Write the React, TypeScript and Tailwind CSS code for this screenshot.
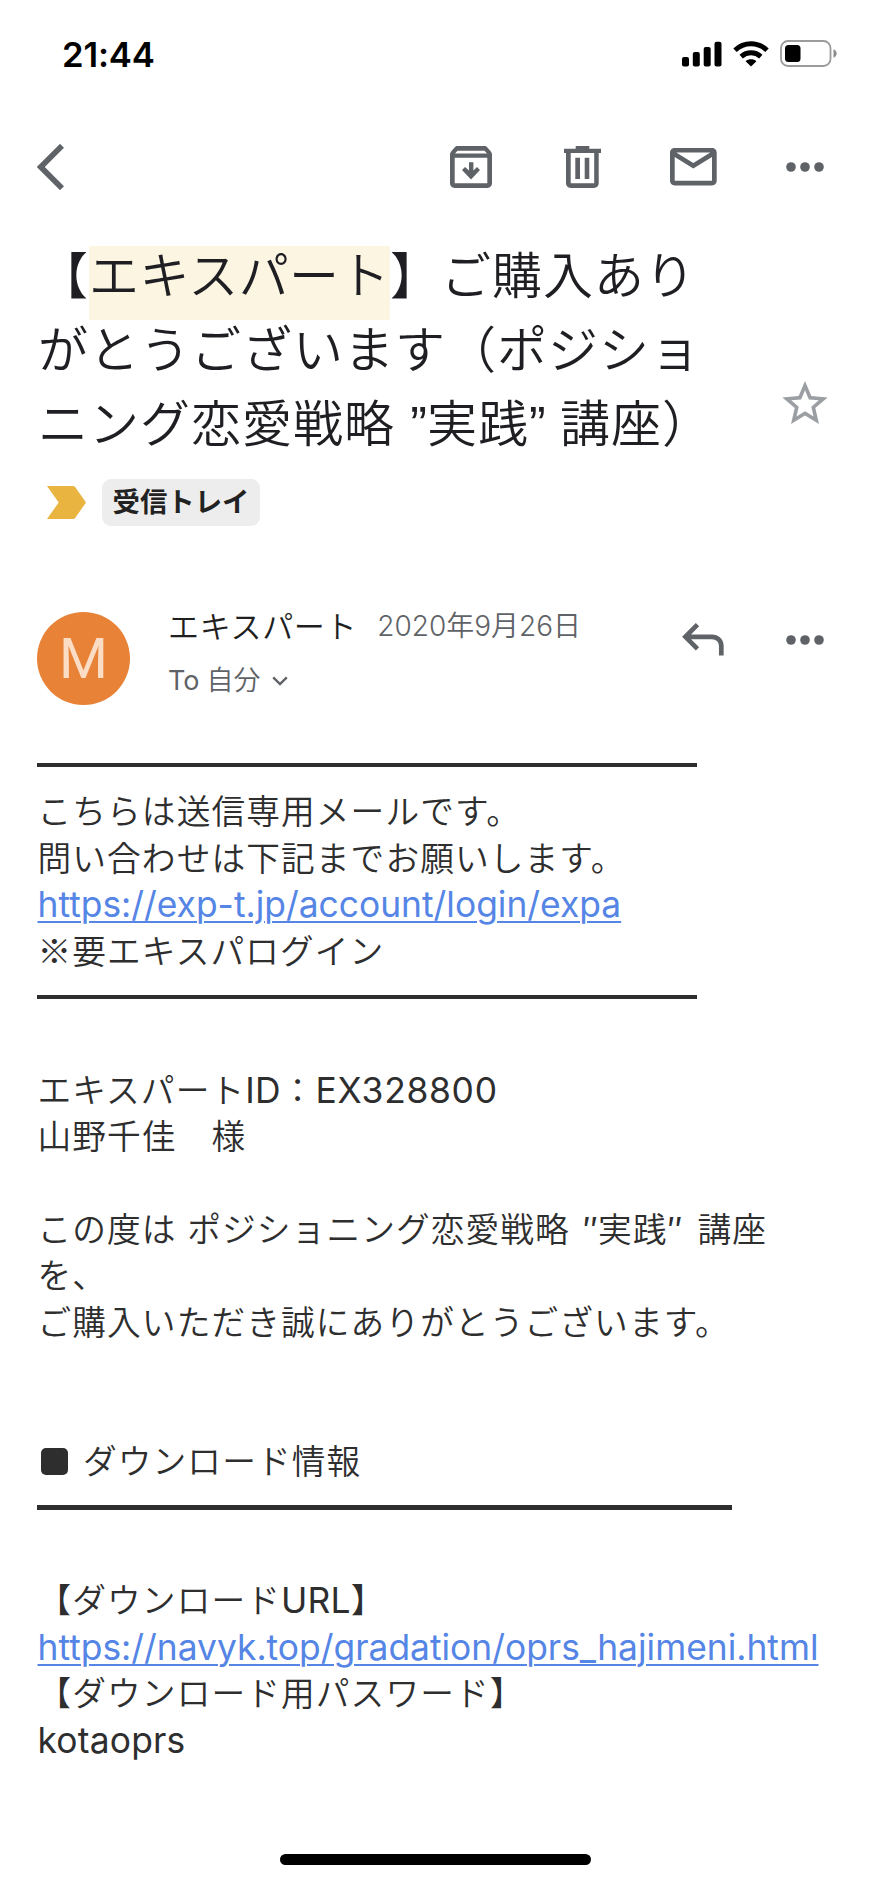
import React from "react";

const StatusBar = () => (
  <div className="flex h-[107px] items-center justify-between pl-[62px] pr-[32px]">
    <p className="mt-px text-[34.7px] font-semibold leading-none tracking-[-0.2px] text-black">
      21:44
    </p>
    <div className="flex items-center">
      <svg width="40" height="26" viewBox="0 0 40 26">
        <rect x="0" y="16" width="7" height="9.5" rx="2" />
        <rect x="10.8" y="11" width="7" height="14.5" rx="2" />
        <rect x="21.7" y="6" width="7" height="19.5" rx="2" />
        <rect x="32.5" y="0.7" width="7" height="24.8" rx="2" />
      </svg>
      <svg className="ml-[11px]" width="36" height="26" viewBox="0 0 36 26">
        <g fill="none" stroke="#000" strokeWidth="5">
          <path d="M2 9.2C11 0.6 25 0.6 34 9.2" />
          <path d="M8.2 15.6C13.8 10.6 22.2 10.6 27.8 15.6" />
        </g>
        <path d="M18 25.6l-5.4-5.4c3-2.6 7.8-2.6 10.8 0z" />
      </svg>
      <svg className="ml-[11px]" width="58" height="27" viewBox="0 0 58 27">
        <rect
          x="1"
          y="1"
          width="49.5"
          height="25"
          rx="7"
          fill="none"
          stroke="#9b9b9b"
          strokeWidth="1.8"
        />
        <rect x="5" y="5" width="15.5" height="17" rx="3.5" />
        <path d="M53.5 9.3c4.2 1.4 4.2 7 0 8.4z" fill="#8c8c8c" />
      </svg>
    </div>
  </div>
);

const Dots = () => (
  <svg width="38" height="10" viewBox="0 0 38 10" fill="#5f6367">
    <circle cx="5" cy="5" r="4.8" />
    <circle cx="19" cy="5" r="4.8" />
    <circle cx="33" cy="5" r="4.8" />
  </svg>
);

const Toolbar = () => (
  <div className="flex h-[120px] items-center pl-[37px] text-[#5f6367]">
    <svg width="28" height="46" viewBox="0 0 28 46" fill="none">
      <path d="M25 1.8L3.8 23 25 44.2" stroke="currentColor" strokeWidth="5.6" />
    </svg>
    <svg className="ml-[385px]" width="42" height="42" viewBox="0 0 42 42" fill="currentColor">
      <path
        fillRule="evenodd"
        d="M7.5 0h27c1.1 0 2 .5 2.7 1.3l3.7 4.2c.7.8 1.1 1.9 1.1 3v28.8c0 2.6-2.1 4.7-4.7 4.7H4.7C2.1 42 0 39.9 0 37.3V8.5c0-1.1.4-2.2 1.1-3l3.7-4.2C5.5.5 6.4 0 7.5 0zM7.5 4.7L5 7.5h32l-2.5-2.8zM4.7 11.7v25.6h32.6V11.7z"
      />
      <path d="M19 16.3h4.4v8.2l3.600-3.500 3 3.100-9 9.500-9-9.500 3-3.100 4 3.500z" />
    </svg>
    <svg className="ml-[72px]" width="37" height="42" viewBox="0 0 37 42" fill="currentColor">
      <path
        fillRule="evenodd"
        d="M11.7 0h13.6v2.7H37V7h-2.3v30.3c0 2.6-2.1 4.7-4.7 4.7H6.7C4.1 42 2 39.9 2 37.3V7H0V2.7h11.7zM6.7 7v30.3h23.5V7z"
      />
      <path d="M11.3 11.7H16V33h-4.7zM20.7 11.7h4.6V33h-4.6z" />
    </svg>
    <svg className="ml-[69px]" width="47" height="38" viewBox="0 0 47 38" fill="currentColor">
      <path
        fillRule="evenodd"
        d="M4.7 0H42c2.6 0 4.7 2.1 4.7 4.7v28c0 2.6-2.1 4.7-4.7 4.7H4.7C2.1 37.4 0 35.3 0 32.7v-28C0 2.1 2.1 0 4.7 0zM6.3 4.5l17 10.5 17-10.5zM4.7 9v23.7H42V9L23.3 20.5z"
      />
    </svg>
    <div className="ml-[69px] flex">
      <Dots />
    </div>
  </div>
);

const Subject = () => (
  <div className="flex pl-[37px] pr-[42px] pt-[12px]">
    <h1 className="h-[222px] w-[745px] whitespace-nowrap pl-px text-[50px] font-[350] leading-[74px] tracking-[1px] text-[#1f1f23]">
      <div className="h-[74px]">
        【
        <span className="mb-[-7px] inline-block h-[74px] bg-[#fbf5e2] leading-[61px] tracking-[0.4px]">
          エキスパート
        </span>
        】ご購入あり
      </div>
      <div className="h-[74px]">がとうございます（ポジショ</div>
      <div className="h-[74px]">
        ニング恋愛戦略
        <span className="inline-block w-[32px] text-right font-['Liberation_Sans',sans-serif] leading-none tracking-normal">
          ”
        </span>
        実践
        <span className="inline-block w-[31px] font-['Liberation_Sans',sans-serif] leading-none tracking-normal">
          ”
        </span>
        講座）
      </div>
    </h1>
    <svg className="mt-[142px] shrink-0" width="46" height="43" viewBox="2 2 20 19" fill="#9b9fa3">
      <path d="M22 9.24l-7.19-.62L12 2 9.19 8.63 2 9.24l5.46 4.73L5.82 21 12 17.27 18.18 21l-1.63-7.03L22 9.24zM12 15.4l-3.76 2.27 1-4.28-3.32-2.88 4.38-.38L12 6.1l1.71 4.04 4.38.38-3.32 2.88 1 4.28L12 15.4z" />
    </svg>
  </div>
);

const Labels = () => (
  <div className="mt-[18px] flex h-[47px] items-center pl-[47px]">
    <svg width="39" height="33" viewBox="0 0 39 33" fill="#e9b43f">
      <path d="M0 0h25.5c1.2 0 2.2.5 3 1.5L39 16.5 28.5 31.5c-.8 1-1.8 1.5-3 1.5H0l11.7-16.5z" />
    </svg>
    <span className="ml-[16px] flex h-[47px] w-[158px] items-center justify-center rounded-[9px] bg-[#ededed] text-[27.4px] font-semibold leading-none text-[#222]">
      受信トレイ
    </span>
  </div>
);

const Sender = () => (
  <div className="mt-[86px] flex h-[93px] pl-[37px] text-[#5f6367]">
    <div className="flex h-[93px] w-[93px] items-center justify-center rounded-full bg-[#e88237] font-['Roboto',sans-serif] text-[56px] leading-none text-[#fbdcc4]">
      M
    </div>
    <div className="ml-[38px] w-[514px] font-[350]">
      <div className="flex h-[28px] items-center whitespace-nowrap leading-none">
        <span className="text-[31px] tracking-[0.7px] text-[#1f1f1f]">エキスパート</span>
        <span className="ml-[20px] text-[28px]">2020年9月26日</span>
      </div>
      <div className="mt-[26px] flex h-[28px] items-center text-[27px] leading-none">
        <span className="mr-[7px] font-normal">To</span>
        自分
        <svg className="ml-[11px] mt-[2px]" width="16" height="10" viewBox="0 0 16 10" fill="none">
          <path d="M1.2 1.3L8 8l6.8-6.7" stroke="currentColor" strokeWidth="2.4" />
        </svg>
      </div>
    </div>
    <svg className="mt-[11px]" width="42" height="34" viewBox="0 0 42 34" fill="none">
      <path
        d="M15.5 1.7L3.4 13.8l12.1 12.1M3.4 13.8H30c5 0 9.3 3.5 9.3 9V32.5"
        stroke="currentColor"
        strokeWidth="4.7"
      />
    </svg>
    <div className="ml-[62px] mt-[23px]">
      <Dots />
    </div>
  </div>
);

const Rule = ({ className }: { className: string }) => (
  <div className="flex h-[46.42px] items-center">
    <div className={`h-[4.5px] bg-[#2e2e2f] ${className}`} />
  </div>
);

const Line = ({ children }: { children?: React.ReactNode }) => (
  <p className="h-[46.42px] pl-[0.5px] pt-px">{children}</p>
);

const Latin = ({ children }: { children: React.ReactNode }) => (
  <span className="text-[35.4px] font-normal leading-none tracking-[0.2px]">{children}</span>
);

const Link = ({ children }: { children: React.ReactNode }) => (
  <a
    href="#"
    className="text-[35.4px] font-normal leading-none tracking-normal text-[#5585e5] underline decoration-[2px] underline-offset-[4px]"
  >
    {children}
  </a>
);

const Body = () => (
  <div className="mt-[37px] whitespace-nowrap pl-[37px] text-[33.7px] font-[350] leading-[46.42px] tracking-[1.1px] text-[#2e2e2f]">
    <Rule className="w-[660px]" />
    <Line>こちらは送信専用メールです。</Line>
    <Line>問い合わせは下記までお願いします。</Line>
    <Line>
      <Link>https://exp-t.jp/account/login/expa</Link>
    </Line>
    <Line>
      <span className="font-['Noto_Sans_CJK_JP',sans-serif] leading-none">※</span>
      要エキスパログイン
    </Line>
    <Rule className="w-[660px]" />
    <Line />
    <Line>
      エキスパート<Latin>ID</Latin>：
      <span className="text-[35.4px] font-normal leading-none tracking-[0.7px]">EX328800</span>
    </Line>
    <Line>山野千佳　様</Line>
    <Line />
    <Line>
      この度は ポジショニング恋愛戦略
      <span className="inline-block w-[28px] text-right font-normal tracking-normal">″</span>
      実践
      <span className="inline-block w-[30px] font-normal tracking-normal">″</span>
      講座
    </Line>
    <Line>を、</Line>
    <Line>ご購入いただき誠にありがとうございます。</Line>
    <Line />
    <Line />
    <div className="flex h-[46.42px] items-center">
      <span className="ml-[4px] h-[26.5px] w-[26.5px] rounded-[5px] bg-[#2e2e2f]" />
      <span className="ml-[15.5px] mt-[2px]">ダウンロード情報</span>
    </div>
    <Rule className="w-[695px]" />
    <Line />
    <Line>
      【ダウンロード<Latin>URL</Latin>】
    </Line>
    <Line>
      <Link>https://navyk.top/gradation/oprs_hajimeni.html</Link>
    </Line>
    <Line>【ダウンロード用パスワード】</Line>
    <Line>
      <Latin>kotaoprs</Latin>
    </Line>
  </div>
);

const App = () => {
  return (
    <div
      lang="ja"
      className="flex h-[1884px] w-[870px] flex-col overflow-hidden bg-white font-['Inter','Noto_Sans_CJK_JP',sans-serif]"
    >
      <StatusBar />
      <Toolbar />
      <Subject />
      <Labels />
      <Sender />
      <Body />
      <div className="mb-[19px] mt-auto h-[11.5px] w-[311px] self-center rounded-full bg-black" />
    </div>
  );
};

export default App;
